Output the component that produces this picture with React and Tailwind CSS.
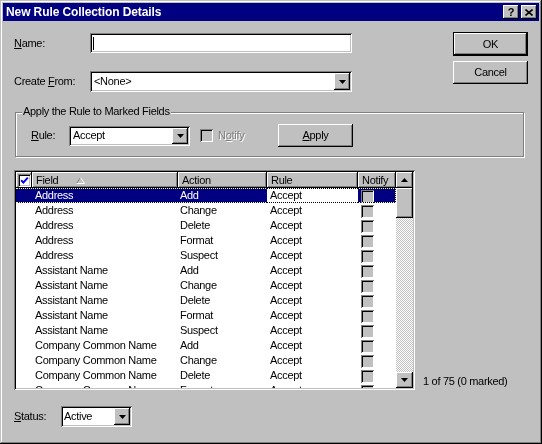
import React from "react";

const WINDOW =
  "shadow-[inset_-1px_-1px_0_#000,inset_1px_1px_0_#c0c0c0,inset_-2px_-2px_0_#808080,inset_2px_2px_0_#fff]";
const RAISED =
  "shadow-[inset_-1px_-1px_0_#000,inset_1px_1px_0_#fff,inset_-2px_-2px_0_#808080,inset_2px_2px_0_#c0c0c0]";
const SUNKEN =
  "shadow-[inset_1px_1px_0_#808080,inset_-1px_-1px_0_#fff,inset_2px_2px_0_#000,inset_-2px_-2px_0_#c0c0c0]";

function DownArrow() {
  return (
    <svg width="7" height="4" viewBox="0 0 7 4">
      <polygon points="0,0 7,0 3.5,4" fill="#000" />
    </svg>
  );
}

function UpArrow() {
  return (
    <svg width="7" height="4" viewBox="0 0 7 4">
      <polygon points="0,4 7,4 3.5,0" fill="#000" />
    </svg>
  );
}

function Combo({ className, pad = "pl-[2px]", children }) {
  return (
    <div className={`bg-white p-[2px] flex ${SUNKEN} ${className}`}>
      <div className={`flex-1 flex items-center leading-none whitespace-nowrap ${pad}`}>{children}</div>
      <div className={`w-[16px] h-full bg-[#c0c0c0] flex items-center justify-center ${RAISED}`}>
        <DownArrow />
      </div>
    </div>
  );
}

function Button({ className, children }) {
  return (
    <div className={`bg-[#c0c0c0] flex items-center justify-center leading-none ${RAISED} ${className}`}>
      {children}
    </div>
  );
}

function Check() {
  return <div className={`w-[13px] h-[13px] shrink-0 bg-[#c0c0c0] ${SUNKEN}`} />;
}

function HeaderCheck() {
  return (
    <div className={`w-[13px] h-[13px] bg-white flex items-center justify-center ${SUNKEN}`}>
      <svg width="9" height="9" viewBox="0 0 9 9">
        <path d="M1.2 4.2 L3.4 6.6 L7.8 1.6" stroke="#0000ff" strokeWidth="2" fill="none" />
      </svg>
    </div>
  );
}

function SortArrow() {
  return (
    <svg width="9" height="7" viewBox="0 0 9 7" className="ml-[18px]">
      <path d="M0.5 6.5 L4.5 0.5" stroke="#808080" fill="none" />
      <path d="M4.5 0.5 L8.5 6.5 L0.5 6.5" stroke="#fff" fill="none" />
    </svg>
  );
}

const rows = [
  ["Address", "Add"],
  ["Address", "Change"],
  ["Address", "Delete"],
  ["Address", "Format"],
  ["Address", "Suspect"],
  ["Assistant Name", "Add"],
  ["Assistant Name", "Change"],
  ["Assistant Name", "Delete"],
  ["Assistant Name", "Format"],
  ["Assistant Name", "Suspect"],
  ["Company Common Name", "Add"],
  ["Company Common Name", "Change"],
  ["Company Common Name", "Delete"],
  ["Company Common Name", "Format"],
];

function Row({ field, action, selected }) {
  return (
    <div
      className={`relative flex shrink-0 h-[15px] leading-[15px] whitespace-nowrap ${
        selected ? "bg-[#000080] text-white" : ""
      }`}
    >
      <div className="w-[16px]" />
      <div className="w-[146px] pl-[3px] overflow-hidden">{field}</div>
      <div className="w-[89px] pl-[2px]">{action}</div>
      <div className={`w-[91px] pl-[3px] ${selected ? "bg-white text-black" : ""}`}>Accept</div>
      <div className="w-[38px] pl-[3px] pt-[2px]">
        <Check />
      </div>
      {selected && (
        <div className="absolute inset-0 border-y border-r border-dotted border-white mix-blend-difference pointer-events-none" />
      )}
    </div>
  );
}

export default function App() {
  return (
    <div
      className={`w-[542px] h-[444px] bg-[#c0c0c0] p-[3px] flex flex-col font-['Liberation_Sans',Arial,sans-serif] text-[11px] tracking-[-0.3px] text-black select-none ${WINDOW}`}
    >
      {/* Title bar */}
      <div className="h-[18px] shrink-0 bg-[#000080] flex items-center pl-[3px] pr-[2px]">
        <span className="text-white font-bold text-[12px] tracking-[-0.1px] leading-none">
          New Rule Collection Details
        </span>
        <div className="ml-auto flex gap-[2px]">
          <div className={`w-[16px] h-[14px] bg-[#c0c0c0] flex items-center justify-center ${RAISED}`}>
            <span className="font-bold text-[11px] leading-none tracking-normal">?</span>
          </div>
          <div className={`w-[16px] h-[14px] bg-[#c0c0c0] flex items-center justify-center ${RAISED}`}>
            <svg width="8" height="7" viewBox="0 0 8 7">
              <path d="M0.5 0.5 L7.5 6.5 M7.5 0.5 L0.5 6.5" stroke="#000" strokeWidth="1.6" fill="none" />
            </svg>
          </div>
        </div>
      </div>

      {/* Body */}
      <div className="flex flex-col pl-[11px] pr-[11px]">
        {/* Top section */}
        <div className="flex mt-[11px]">
          <div className="flex flex-col mt-[1px]">
            <div className="flex items-center h-[20px]">
              <span className="w-[76px]">
                <u>N</u>ame:
              </span>
              <div className={`w-[262px] h-[20px] bg-white flex items-center pl-[3px] ${SUNKEN}`}>
                <div className="w-px h-[13px] bg-black" />
              </div>
            </div>
            <div className="flex items-center h-[21px] mt-[18px]">
              <span className="w-[76px]">
                Create <u>F</u>rom:
              </span>
              <Combo className="w-[262px] h-[21px]">&lt;None&gt;</Combo>
            </div>
          </div>
          <div className="ml-auto flex flex-col">
            <div className="w-[75px] h-[24px] border border-black">
              <Button className="w-full h-full">OK</Button>
            </div>
            <Button className="w-[75px] h-[23px] mt-[5px]">Cancel</Button>
          </div>
        </div>

        {/* Group box */}
        <div className="relative mt-[20px] ml-[1px] w-[509px] h-[45px] border border-[#808080] shadow-[1px_1px_0_#fff,inset_1px_1px_0_#fff]">
          <span className="absolute left-[6px] top-[-8px] px-[1px] bg-[#c0c0c0] leading-[13px] whitespace-nowrap">
            Apply the Rule to Marked Fields
          </span>
          <div className="flex items-center h-[23px] mt-[11px] pl-[15px]">
            <span className="w-[38px]">
              <u>R</u>ule:
            </span>
            <Combo className="w-[121px] h-[20px]">Accept</Combo>
            <div className="w-[78px] ml-[10px] flex items-center">
              <Check />
              <span className="ml-[5px] text-[#808080] [text-shadow:1px_1px_0_#fff]">
                N<u>o</u>tify
              </span>
            </div>
            <Button className="w-[75px] h-[23px]">
              <span>
                <u>A</u>pply
              </span>
            </Button>
          </div>
        </div>

        {/* List */}
        <div className="flex items-end mt-[13px]">
          <div className={`w-[401px] h-[220px] bg-white p-[2px] flex ${SUNKEN}`}>
            <div className="w-[380px] flex flex-col overflow-hidden">
              <div className="flex shrink-0 h-[16px] bg-[#c0c0c0]">
                <div className={`w-[16px] flex items-center justify-center ${RAISED}`}>
                  <HeaderCheck />
                </div>
                <div className={`w-[146px] pl-[4px] flex items-center ${RAISED}`}>
                  <span>Field</span>
                  <SortArrow />
                </div>
                <div className={`w-[89px] pl-[4px] flex items-center ${RAISED}`}>Action</div>
                <div className={`w-[91px] pl-[4px] flex items-center ${RAISED}`}>Rule</div>
                <div className={`w-[38px] pl-[4px] flex items-center ${RAISED}`}>Notify</div>
              </div>
              {rows.map(([f, a], i) => (
                <Row key={i} field={f} action={a} selected={i === 0} />
              ))}
            </div>
            <div className="w-[17px] flex flex-col">
              <div className={`h-[16px] bg-[#c0c0c0] flex items-center justify-center ${RAISED}`}>
                <UpArrow />
              </div>
              <div className={`h-[30px] bg-[#c0c0c0] ${RAISED}`} />
              <div className="flex-1 bg-[conic-gradient(#fff_25%,#c0c0c0_0_50%,#fff_0_75%,#c0c0c0_0)] bg-[length:2px_2px]" />
              <div className={`h-[16px] bg-[#c0c0c0] flex items-center justify-center ${RAISED}`}>
                <DownArrow />
              </div>
            </div>
          </div>
          <span className="ml-[8px] mb-[2px] leading-[13px] whitespace-nowrap">1 of 75 (0 marked)</span>
        </div>

        {/* Status */}
        <div className="flex items-center h-[21px] mt-[16px]">
          <span className="w-[47px]">
            <u>S</u>tatus:
          </span>
          <Combo className="w-[71px] h-[21px]" pad="pl-[1px]">
            Active
          </Combo>
        </div>
      </div>
    </div>
  );
}
